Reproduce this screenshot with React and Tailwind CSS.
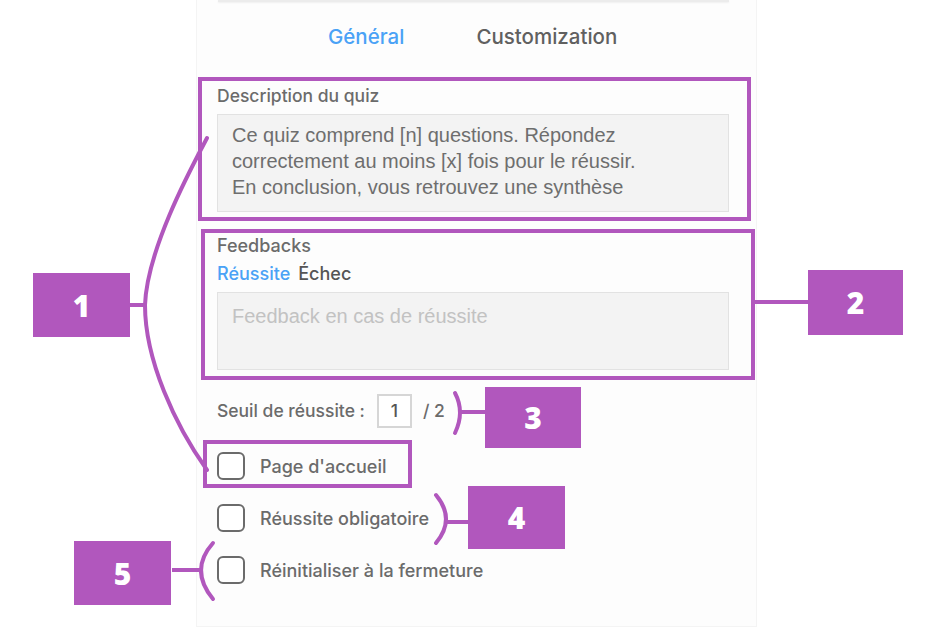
import React from "react";

const P = "#b157bd";

function Checkbox({ label }) {
  return (
    <div className="flex items-center h-[28px]">
      <div className="w-[28px] h-[28px] rounded-[6px] border-[2.5px] border-[#6b6b6b] bg-white" />
      <span className="ml-[15px] text-[18px] text-[#6b6b6b] font-medium">{label}</span>
    </div>
  );
}

function Badge({ n, className }) {
  return (
    <div
      className={
        "absolute flex items-center justify-center bg-[#b157bd] text-white text-[30px] font-extrabold " +
        className
      }
      style={{ fontFamily: '"Open Sans", sans-serif' }}
    >
      {n}
    </div>
  );
}

export default function App() {
  return (
    <div
      className="relative w-[945px] h-[633px] bg-white overflow-hidden"
      style={{ fontFamily: 'Inter, "Liberation Sans", sans-serif' }}
    >
      {/* Panel */}
      <div className="ml-[196px] w-[561px] h-[627px] bg-[#fdfdfd] border border-[#f4f4f4] border-t-0 flex flex-col pl-[20px] pr-[28px]">
        <div className="ml-[1px] w-[511px] h-[2px] bg-[#ececec] shadow-[0_1px_2px_rgba(0,0,0,0.06)]" />
        <div className="h-[71px] flex items-center pl-[111px] gap-[72px] text-[20.5px] font-medium">
          <span className="text-[#4aa2f6]">Général</span>
          <span className="text-[#606060]">Customization</span>
        </div>

        <div className="mt-[13px] h-[20px] leading-[20px] text-[17.5px] font-medium text-[#6b6b6b]">
          Description du quiz
        </div>
        <div
          className="mt-[8px] h-[98px] w-[512px] bg-[#f3f3f3] border border-[#e2e2e2] pl-[14px] pt-[7px] text-[20px] leading-[26px] text-[#6e6e6e]"
          style={{ fontFamily: '"Liberation Sans", Arial, sans-serif' }}
        >
          Ce quiz comprend [n] questions. Répondez
          <br />
          correctement au moins [x] fois pour le réussir.
          <br />
          En conclusion, vous retrouvez une synthèse
        </div>

        <div className="mt-[24px] h-[20px] leading-[20px] text-[18px] font-medium text-[#6b6b6b]">
          Feedbacks
        </div>
        <div className="mt-[8px] h-[20px] leading-[20px] text-[18px] font-medium flex gap-[8px]">
          <span className="text-[#4aa2f6]">Réussite</span>
          <span className="text-[#555555]">Échec</span>
        </div>
        <div
          className="mt-[8px] h-[78px] w-[512px] bg-[#f3f3f3] border border-[#e2e2e2] pl-[14px] pt-[10px] text-[20px] leading-[26px] text-[#c2c2c2]"
          style={{ fontFamily: '"Liberation Sans", Arial, sans-serif' }}
        >
          Feedback en cas de réussite
        </div>

        <div className="mt-[24px] h-[34px] flex items-center text-[17.5px] font-medium text-[#6b6b6b]">
          <span>Seuil de réussite :</span>
          <div className="ml-[12px] w-[35px] h-[34px] border-2 border-[#d6d6d6] bg-white flex items-center justify-center text-[#555]">
            1
          </div>
          <span className="ml-[11px]">/ 2</span>
        </div>

        <div className="mt-[24px] flex flex-col gap-[24px]">
          <Checkbox label="Page d'accueil" />
          <Checkbox label="Réussite obligatoire" />
          <Checkbox label="Réinitialiser à la fermeture" />
        </div>
      </div>

      {/* Annotation frames */}
      <div className="absolute left-[198px] top-[77px] w-[553px] h-[144px] border-[4px] border-[#b157bd]" />
      <div className="absolute left-[201px] top-[229px] w-[554px] h-[151px] border-[4px] border-[#b157bd]" />
      <div className="absolute left-[203px] top-[440px] w-[209px] h-[48px] border-[4px] border-[#b157bd]" />

      <svg className="absolute left-0 top-0 pointer-events-none" width="945" height="633">
        <g fill="none" stroke={P} strokeWidth="4" strokeLinecap="round">
          <path d="M130 305 H145" strokeLinecap="butt" />
          <path d="M207 138 C190 170 147 250 145 305 C145 360 175 425 207 470" />
          <path d="M755 302 H808" strokeLinecap="butt" />
          <path d="M460 412 H485" strokeLinecap="butt" />
          <path d="M455 393 Q465 412 455 433" />
          <path d="M446 522 H468" strokeLinecap="butt" />
          <path d="M436 495 Q456 519 436 543" />
          <path d="M172 570 H201" strokeLinecap="butt" />
          <path d="M213 543 Q189 570 213 599" />
        </g>
      </svg>

      <Badge n="1" className="left-[33px] top-[273px] w-[97px] h-[64px]" />
      <Badge n="2" className="left-[808px] top-[270px] w-[95px] h-[65px]" />
      <Badge n="3" className="left-[485px] top-[387px] w-[96px] h-[61px]" />
      <Badge n="4" className="left-[468px] top-[486px] w-[97px] h-[63px]" />
      <Badge n="5" className="left-[74px] top-[541px] w-[97px] h-[64px]" />
    </div>
  );
}
